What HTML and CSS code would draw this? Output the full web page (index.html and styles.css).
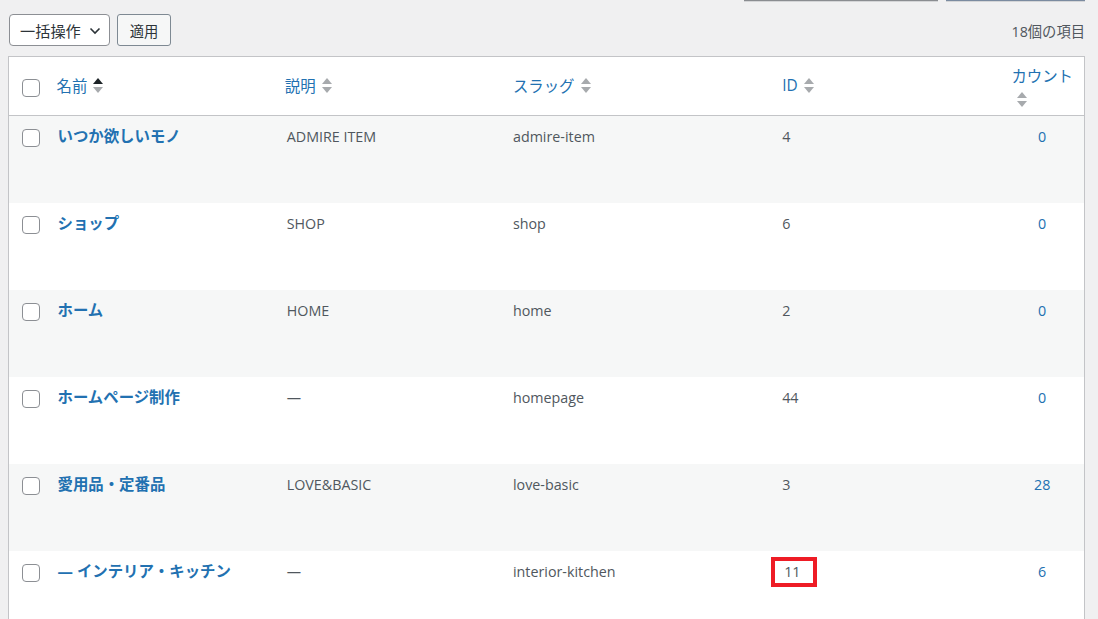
FILE: index.html
```html
<!DOCTYPE html>
<html lang="ja">
<head>
<meta charset="utf-8">
<link rel="stylesheet" href="styles.css">
</head>
<body>
<div class="page">
  <div class="topbtns">
    <span class="tb tb1"></span>
    <span class="tb tb2"></span>
  </div>
  <div class="toolbar">
    <div class="bulk">
      <div class="select">一括操作
        <svg class="chev" width="12" height="8" viewBox="0 0 12 8"><path d="M1.5 1.5 L6 6 L10.5 1.5" fill="none" stroke="#2c3338" stroke-width="1.6"/></svg>
      </div>
      <button class="apply">適用</button>
    </div>
    <div class="count">18個の項目</div>
  </div>
  <table class="list">
    <colgroup>
      <col class="c-cb"><col class="c-name"><col class="c-desc"><col class="c-slug"><col class="c-id"><col class="c-posts">
    </colgroup>
    <thead>
      <tr>
        <th class="cb"><span class="box"></span></th>
        <th><a class="sort">名前<span class="ind"><i class="up dark"></i><i class="down"></i></span></a></th>
        <th class="h-desc"><a class="sort">説明<span class="ind"><i class="up"></i><i class="down"></i></span></a></th>
        <th><a class="sort">スラッグ<span class="ind"><i class="up"></i><i class="down"></i></span></a></th>
        <th><a class="sort">ID<span class="ind"><i class="up"></i><i class="down"></i></span></a></th>
        <th class="posts"><a class="sort-wrap"><span class="ptitle">カウント</span><span class="ind ind-block"><i class="up"></i><i class="down"></i></span></a></th>
      </tr>
    </thead>
    <tbody>
      <tr class="alt">
        <td class="cb"><span class="box"></span></td>
        <td><a class="title">いつか欲しいモノ</a></td>
        <td>ADMIRE ITEM</td>
        <td>admire-item</td>
        <td>4</td>
        <td class="posts"><a>0</a></td>
      </tr>
      <tr>
        <td class="cb"><span class="box"></span></td>
        <td><a class="title">ショップ</a></td>
        <td>SHOP</td>
        <td>shop</td>
        <td>6</td>
        <td class="posts"><a>0</a></td>
      </tr>
      <tr class="alt">
        <td class="cb"><span class="box"></span></td>
        <td><a class="title">ホーム</a></td>
        <td>HOME</td>
        <td>home</td>
        <td>2</td>
        <td class="posts"><a>0</a></td>
      </tr>
      <tr>
        <td class="cb"><span class="box"></span></td>
        <td><a class="title">ホームページ制作</a></td>
        <td>—</td>
        <td>homepage</td>
        <td>44</td>
        <td class="posts"><a>0</a></td>
      </tr>
      <tr class="alt">
        <td class="cb"><span class="box"></span></td>
        <td><a class="title">愛用品・定番品</a></td>
        <td>LOVE&amp;BASIC</td>
        <td>love-basic</td>
        <td>3</td>
        <td class="posts"><a>28</a></td>
      </tr>
      <tr>
        <td class="cb"><span class="box"></span></td>
        <td><a class="title">— インテリア・キッチン</a></td>
        <td>—</td>
        <td>interior-kitchen</td>
        <td><span class="mark">11</span></td>
        <td class="posts"><a>6</a></td>
      </tr>
    </tbody>
  </table>
</div>
</body>
</html>
```
FILE: styles.css
```css
html, body {
  margin: 0;
  padding: 0;
  background: #f0f0f1;
  overflow: hidden;
}
body {
  font-family: "Open Sans", "Noto Sans CJK JP", sans-serif;
  font-size: 14.3px;
  color: #50575e;
}
.page {
  width: 1098px;
  height: 619px;
  padding: 0 13px 0 8px;
  box-sizing: border-box;
}
.topbtns {
  display: flex;
  justify-content: flex-end;
  gap: 8px;
  height: 2px;
}
.tb {
  display: block;
  height: 1px;
  border-bottom: 1px solid #d4d5d7;
}
.tb1 { width: 194px; background: #8a8d91; }
.tb2 { width: 139px; background: #7b8ba0; }
.toolbar {
  display: flex;
  justify-content: space-between;
  align-items: center;
  height: 32px;
  margin-top: 12px;
  margin-bottom: 10px;
}
.bulk {
  display: flex;
  gap: 7px;
  padding-left: 1px;
}
.select {
  display: flex;
  align-items: center;
  gap: 8px;
  width: 101px;
  height: 32px;
  box-sizing: border-box;
  padding: 0 8px 0 10px;
  border: 1px solid #8c8f94;
  border-radius: 4px;
  background: #fff;
  color: #2c3338;
  font-size: 15.2px;
}
.chev { margin-top: 1px; }
.apply {
  width: 54px;
  height: 32px;
  box-sizing: border-box;
  padding: 0;
  border: 1px solid #7e8993;
  border-radius: 3px;
  background: #f6f7f7;
  color: #2c3338;
  font: inherit;
  font-size: 14.3px;
}
.count {
  color: #50575e;
  font-size: 14.3px;
}
.list {
  width: 1077px;
  border-collapse: collapse;
  table-layout: fixed;
  background: #fff;
  border: 1px solid #c3c4c7;
}
.c-cb { width: 40px; }
.c-name { width: 230px; }
.c-desc { width: 226px; }
.c-slug { width: 269px; }
.c-id { width: 226px; }
.c-posts { width: 84px; }
thead tr { height: 59px; }
th {
  height: 57px;
  box-sizing: border-box;
  padding: 0 8px 2px;
  text-align: left;
  font-weight: 400;
  vertical-align: middle;
  border-bottom: 1px solid #c3c4c7;
}
th.h-desc { padding-left: 6px; }
th.cb, td.cb { padding: 0 0 0 13px; }
.box {
  display: block;
  width: 16px;
  height: 16px;
  border: 1px solid #8c8f94;
  border-radius: 4px;
  background: #fff;
}
th .box { margin-top: 4px; }
.sort {
  display: inline-flex;
  align-items: center;
  gap: 6px;
  color: #2271b1;
  font-size: 15.4px;
}
.ind {
  display: inline-flex;
  flex-direction: column;
  gap: 3px;
  margin-top: 1px;
}
.ind i {
  display: block;
  width: 0;
  height: 0;
  border-left: 5px solid transparent;
  border-right: 5px solid transparent;
}
.ind .up { border-bottom: 6px solid #a7aaad; }
.ind .down { border-top: 6px solid #a7aaad; }
.ind .up.dark { border-bottom-color: #1d2327; }
th.posts {
  padding: 0;
  text-align: center;
  vertical-align: top;
}
.sort-wrap {
  display: flex;
  flex-direction: column;
  color: #2271b1;
  font-size: 15.4px;
  padding-top: 9px;
}
.ptitle { display: block; text-align: center; line-height: 22px; }
.ind-block { margin: 4px 0 0 17px; }
td {
  height: 87px;
  box-sizing: border-box;
  padding: 10px 8px 0;
  vertical-align: top;
  line-height: 21px;
}
td.cb { padding-top: 13px; }
tr.alt td { background: #f6f7f7; }
.title {
  color: #2271b1;
  font-weight: 700;
  font-size: 15.4px;
  padding-left: 1px;
}
td.posts {
  text-align: center;
  padding: 10px 0 0;
}
td.posts a { color: #2271b1; }
.mark {
  position: relative;
  padding-left: 2px;
}
.mark::after {
  content: "";
  position: absolute;
  left: -11px;
  top: -5px;
  width: 38px;
  height: 22px;
  border: 4px solid #ee1c25;
}
```
